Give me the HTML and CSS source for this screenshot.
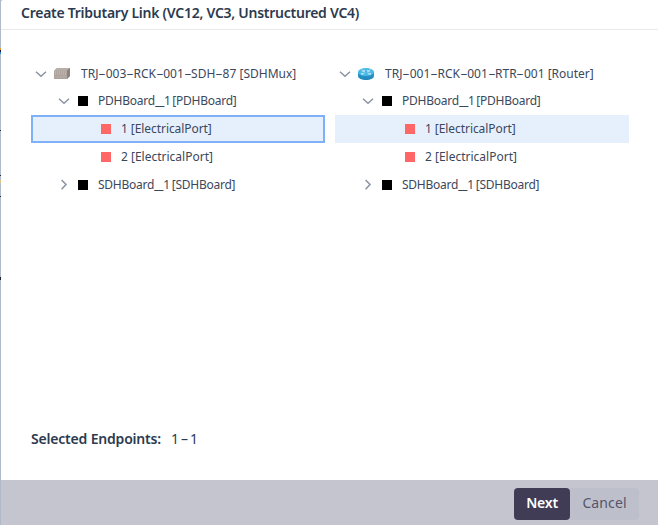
FILE: index.html
```html
<!DOCTYPE html>
<html lang="en">
<head>
<meta charset="utf-8">
<title>Create Tributary Link</title>
<link rel="stylesheet" href="styles.css">
</head>
<body>
<svg width="0" height="0" class="defs" aria-hidden="true">
  <defs>
    <linearGradient id="side" x1="0" y1="0" x2="0" y2="1"><stop offset="0" stop-color="#299bd0"/><stop offset="1" stop-color="#2387bb"/></linearGradient>
    <symbol id="down" viewBox="0 0 12 8"><path d="M1 1.8 6 6.2 11 1.8" fill="none" stroke="#8993a2" stroke-width="1.5"/></symbol>
    <symbol id="right" viewBox="0 0 8 12"><path d="M1.6 1 6 5.6 1.6 10.2" fill="none" stroke="#8993a2" stroke-width="1.5"/></symbol>
  </defs>
</svg>
<div class="dialog">
  <header class="title"><span class="title-text">Create Tributary Link (VC12, VC3, Unstructured VC4)</span></header>
  <main class="content">
    <div class="trees">
      <div class="tree">
        <div class="row root"><svg class="down"><use href="#down"/></svg>
          <svg class="device" viewBox="0 0 16 12"><path d="M3 0h13v8l-3 3H0V3z" fill="#aea39d"/><path d="M3 0h13l-3 2.5H0z" fill="#b9afa9"/><path d="m13 2.5 3-2.5v8l-3 3z" fill="#8c827c"/><path d="M1 4h11M1 6h11" stroke="#c9c2bb" stroke-width="1" stroke-dasharray="1 1"/><path d="M1 9h11" stroke="#bcb2ab" stroke-width=".8"/></svg>
          <span>TRJ<span class="dash">-</span>003<span class="dash">-</span>RCK<span class="dash">-</span>001<span class="dash">-</span>SDH<span class="dash">-</span>87 [SDHMux]</span></div>
        <div class="row board"><svg class="down"><use href="#down"/></svg><i class="box"></i><span class="t-board">PDHBoard<span class="under">_</span>1 [PDHBoard]</span></div>
        <div class="row port selected focused"><i class="box red"></i><span class="t-port">1 [ElectricalPort]</span></div>
        <div class="row port"><i class="box red"></i><span>2 [ElectricalPort]</span></div>
        <div class="row board"><svg class="right"><use href="#right"/></svg><i class="box"></i><span class="t-board">SDHBoard<span class="under">_</span>1 [SDHBoard]</span></div>
      </div>
      <div class="tree">
        <div class="row root"><svg class="down"><use href="#down"/></svg>
          <svg class="device" viewBox="0 0 16 12"><path d="M0 4v4c0 2.4 3.6 4 8 4s8-1.6 8-4V4z" fill="url(#side)"/><ellipse cx="8" cy="4" rx="8" ry="4" fill="#4db9e6"/><path d="m3.5 1.8 3 1.4m-2.2.3 2.2-.3V2M12.5 1.8l-3 1.4m.2-1.2-.2 1.2 2.1.3M6.5 4.8l-3 1.4m0-1.2v1.2h2M9.5 4.8l3 1.4m0-1.2v1.2h-2" fill="none" stroke="#d9f2fc" stroke-width=".7"/></svg>
          <span>TRJ<span class="dash">-</span>001<span class="dash">-</span>RCK<span class="dash">-</span>001<span class="dash">-</span>RTR<span class="dash">-</span>001 [Router]</span></div>
        <div class="row board"><svg class="down"><use href="#down"/></svg><i class="box"></i><span class="t-board">PDHBoard<span class="under">_</span>1 [PDHBoard]</span></div>
        <div class="row port selected"><i class="box red"></i><span class="t-port">1 [ElectricalPort]</span></div>
        <div class="row port"><i class="box red"></i><span>2 [ElectricalPort]</span></div>
        <div class="row board"><svg class="right"><use href="#right"/></svg><i class="box"></i><span class="t-board">SDHBoard<span class="under">_</span>1 [SDHBoard]</span></div>
      </div>
    </div>
    <div class="endpoints"><span class="endpoints-label">Selected Endpoints:</span><span class="endpoints-value">1 – 1</span></div>
  </main>
  <footer class="footer"><button class="next">Next</button><button class="cancel">Cancel</button></footer>
</div>
</body>
</html>
```

FILE: styles.css
```css
* { box-sizing: border-box; }
body {
  margin: 0;
  height: 525px;
  padding-left: 1px;
  overflow: hidden;
  font-family: "Noto Sans", "Open Sans", sans-serif;
  color: #2c3a4f;
  background: linear-gradient(#dc9a3c 0 2px, #2a1838 2px 4px, #2b8ad0 4px 6px) 0 48px / 1px 6px no-repeat,
    linear-gradient(#222c3c, #222c3c) 0 130px / 1px 1px no-repeat,
    linear-gradient(#222c3c, #222c3c) 0 175px / 1px 1px no-repeat,
    linear-gradient(#e0c283, #e0c283) 0 180px / 1px 3px no-repeat,
    linear-gradient(#222c3c, #222c3c) 0 196px / 1px 1px no-repeat,
    linear-gradient(#20242e, #20242e) 0 277px / 1px 3px no-repeat,
    #b0bac9;
}
.defs { position: absolute; }
.dialog { height: 525px; display: flex; flex-direction: column; background: #fff; border-top-left-radius: 2px; }
.title { height: 30px; padding-left: 20px; border-bottom: 1px solid #e7e9ec; font-size: 14px; font-weight: 600; line-height: 25px; white-space: nowrap; }
.title-text { letter-spacing: -.26px; }
.content { flex: 1; padding: 30px 29px 0 30px; display: flex; flex-direction: column; }
.trees { display: flex; gap: 10px; height: 369px; }
.tree { width: 294px; }
.row { height: 28px; display: flex; align-items: center; font-size: 12px; line-height: 16px; white-space: nowrap; border: 2px solid transparent; color: #3b485b; }
.root { height: 27px; padding-left: 2px; }
.board { padding-left: 25px; }
.port { padding-left: 68px; }
.selected { background: #e6f0fd; }
.focused { border-color: #7eb1f7; }
.down { width: 12px; height: 8px; flex: none; }
.right { width: 8px; height: 12px; margin: 0 2px; flex: none; }
.device { width: 16px; height: 12px; margin: 0 11px 0 7px; flex: none; }
.box { width: 10px; height: 10px; flex: none; background: #000; margin-right: 10px; }
.board .box { margin-left: 8px; }
.red { background: #ff6666; }
.dash { display: inline-block; margin: 0 1.7px; transform: scaleX(1.9); }
.under { display: inline-block; margin: 0 2px; transform: scaleX(1.7); }
.t-board { letter-spacing: -.25px; word-spacing: -1px; }
.t-port { letter-spacing: -.07px; }
.endpoints { font-size: 14px; line-height: 20px; display: flex; }
.endpoints-label { width: 140px; font-weight: 600; letter-spacing: -.19px; }
.endpoints-value { letter-spacing: -.8px; }
.footer { height: 45px; padding: 8px 19px 0 0; display: flex; justify-content: flex-end; align-items: flex-start; background: #c5c5cf; }
button { height: 32px; padding: 0 0 3px; border: 0; border-radius: 4px; font: 14px "Noto Sans", sans-serif; }
.next { width: 56px; color: #fff; background: #403c56; font-weight: 600; letter-spacing: -.2px; }
.cancel { width: 69px; color: #57546e; background: #bdc0ca; border-radius: 0 4px 4px 0; letter-spacing: .1px; }
```
